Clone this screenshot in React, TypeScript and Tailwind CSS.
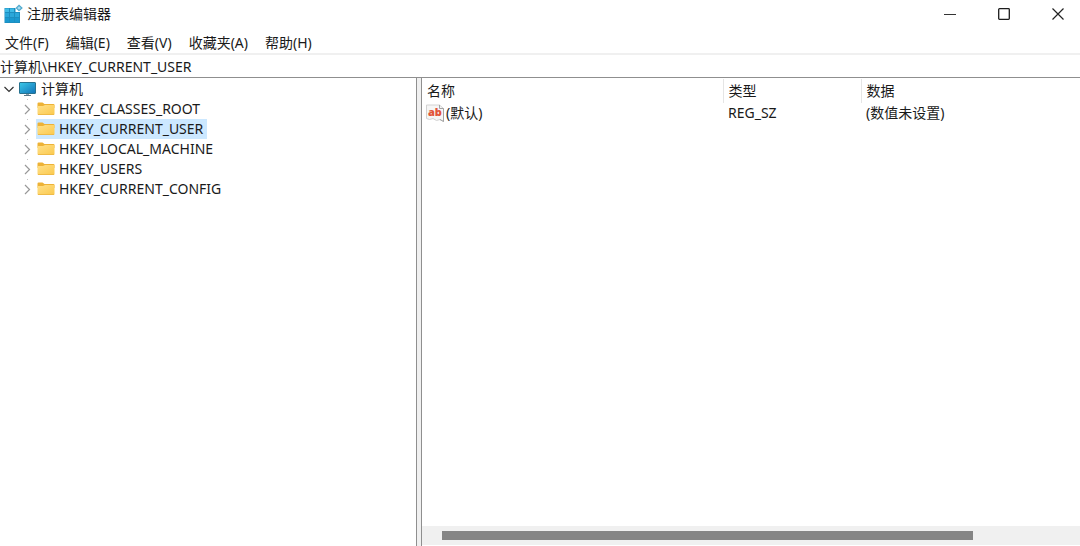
import React from 'react';

const menus = ['文件(F)', '编辑(E)', '查看(V)', '收藏夹(A)', '帮助(H)'];

const hives = [
  'HKEY_CLASSES_ROOT',
  'HKEY_CURRENT_USER',
  'HKEY_LOCAL_MACHINE',
  'HKEY_USERS',
  'HKEY_CURRENT_CONFIG',
];

const RegeditIcon = () => (
  <svg width="19" height="20" viewBox="0 0 19 20" aria-hidden="true">
    <path d="M0.500 4h11v4H16v11H0.500z" fill="#1c8ec0" />
    <path d="M1 4.500h4V8H1zM6 4.500h4V8H6z" fill="#3fbbe6" />
    <path d="M1 9h4v4H1zM6 9h4v4H6zM11 9h4v4h-4z" fill="#2ba7da" />
    <path d="M1 14h4v4H1zM6 14h4v4H6zM11 14h4v4h-4z" fill="#1a98cf" />
    <path d="M15 0.500l3.800 3.500L15 7.500 11.500 4z" fill="#4fa9cd" />
    <path d="M15 2.200l2 1.800-2 1.800L13.200 4z" fill="#a9dcf0" />
  </svg>
);

const ComputerIcon = () => (
  <svg width="18" height="16" viewBox="0 0 18 16" aria-hidden="true">
    <defs>
      <linearGradient id="screen" x1="0" y1="0" x2="1" y2="1">
        <stop offset="0" stopColor="#3cc8e8" />
        <stop offset="1" stopColor="#1173b8" />
      </linearGradient>
    </defs>
    <rect x="0.500" y="1.500" width="16" height="11" rx="0.500" fill="url(#screen)" stroke="#28728f" />
    <path d="M7 13h3v1.500H7z" fill="#8aa0ac" />
    <path d="M5 14h7v1H5z" fill="#5c7888" />
  </svg>
);

const FolderIcon = () => (
  <svg width="18" height="16" viewBox="0 0 18 16" aria-hidden="true">
    <defs>
      <linearGradient id="folder" x1="0" y1="0" x2="1" y2="1">
        <stop offset="0" stopColor="#ffe08a" />
        <stop offset="1" stopColor="#fbc94c" />
      </linearGradient>
    </defs>
    <path d="M0.500 2.500Q0.500 1.500 1.500 1.500H5.500L7.500 3H16.500Q17.500 3 17.500 4V7H0.500z" fill="#edb236" />
    <path d="M0.500 5H6L8 4H17.500V13Q17.500 14 16.500 14H1.500Q0.500 14 0.500 13z" fill="url(#folder)" />
    <path d="M1 13.500H17" stroke="#efbb48" />
  </svg>
);

const StringValueIcon = () => (
  <svg width="18" height="18" viewBox="0 0 18 18" aria-hidden="true">
    <path d="M0.500 1H13.500L17.500 4.500V17.500L14 15.500 10.500 16.500 7 14.500 3.500 15.500 0.500 14.500z" fill="#f6f6f6" stroke="#d2d2d2" />
    <path d="M13.500 1V4.500H17.500V17.500L14 15.500" fill="none" stroke="#a3a3a3" />
    <text x="2" y="12" fontFamily="Open Sans, sans-serif" fontSize="11" fontWeight="800" fill="#e2553a">ab</text>
  </svg>
);

const TreeChevron = () => (
  <svg width="10" height="20" viewBox="0 0 10 20" fill="none" aria-hidden="true">
    <path d="M3 6L7.500 10.500L3 15" stroke="#999" strokeWidth="1.200" />
    <path d="M5 0h1v1H5z" fill="#c4c4c4" />
  </svg>
);

const TitleBar = () => (
  <header className="flex h-7 items-center justify-between pl-1">
    <div className="flex items-center gap-1">
      <RegeditIcon />
      <h1>注册表编辑器</h1>
    </div>
    <div className="flex h-full gap-2.5">
      <button type="button" aria-label="最小化" className="flex w-11 items-center justify-center">
        <svg width="12" height="12" viewBox="0 0 12 12" stroke="#333"><path d="M0 6.500h12" /></svg>
      </button>
      <button type="button" aria-label="最大化" className="flex w-11 items-center justify-center">
        <svg width="12" height="12" viewBox="0 0 12 12" fill="none" stroke="#1c1c1c" strokeWidth="1.300">
          <rect x="0.700" y="0.700" width="10.600" height="10.600" rx="0.800" />
        </svg>
      </button>
      <button type="button" aria-label="关闭" className="flex w-11 items-center justify-center">
        <svg width="12" height="12" viewBox="0 0 12 12" stroke="#222" strokeWidth="1.200"><path d="M0.500 0.500l11 11M11.500 0.500l-11 11" /></svg>
      </button>
    </div>
  </header>
);

const KeyTree = () => (
  <nav className="w-[417px] shrink-0 border-r border-[#8f8f8f] pt-px" aria-label="注册表项">
    <button type="button" className="flex h-5 items-center pl-1">
      <svg width="10" height="10" viewBox="0 0 10 10" fill="none" stroke="#333" strokeWidth="1.200" aria-hidden="true">
        <path d="M0.500 3L5 7.500L9.500 3" />
      </svg>
      <span className="flex items-center gap-1 pl-[5px]">
        <ComputerIcon />
        计算机
      </span>
    </button>
    <ul>
      {hives.map((name) => (
        <li key={name} className="flex h-5 items-center pl-[22px]">
          <TreeChevron />
          <button
            type="button"
            className={
              name === 'HKEY_CURRENT_USER'
                ? 'ml-1 flex h-5 items-center gap-1 bg-[#cce8ff] pr-1 pl-px'
                : 'ml-1 flex h-5 items-center gap-1 pr-1 pl-px'
            }
          >
            <FolderIcon />
            {name}
          </button>
        </li>
      ))}
    </ul>
  </nav>
);

const ValueList = () => (
  <main className="flex min-w-0 flex-1 flex-col border-l border-[#8f8f8f] pt-px">
    <table className="w-full table-fixed text-left">
      <colgroup>
        <col className="w-[301px]" />
        <col className="w-[138px]" />
        <col />
      </colgroup>
      <thead>
        <tr className="h-6">
          <th className="border-r border-[#e5e5e5] pl-[5px] font-normal">名称</th>
          <th className="border-r border-[#e5e5e5] pl-[5px] font-normal">类型</th>
          <th className="pl-[5px] font-normal">数据</th>
        </tr>
      </thead>
      <tbody>
        <tr className="h-5">
          <td className="pl-1">
            <div className="flex items-center gap-0.5">
              <StringValueIcon />
              (默认)
            </div>
          </td>
          <td className="pl-[5px]">REG_SZ</td>
          <td className="pl-[5px]">(数值未设置)</td>
        </tr>
      </tbody>
    </table>
    <div className="mt-auto mb-px bg-[#f0f0f0] px-5 py-[5px]">
      <div
        role="scrollbar"
        aria-label="水平滚动"
        aria-orientation="horizontal"
        aria-valuenow={0}
        className="h-[9px] w-[86%] bg-[#858585]"
      />
    </div>
  </main>
);

const App = () => {
  return (
    <div className="flex min-h-screen flex-col bg-white font-['Noto_Sans','Noto_Sans_CJK_SC',sans-serif] text-[14px] leading-5 text-[#1a1a1a]">
      <TitleBar />
      <div className="flex h-[27px] items-center gap-[17px] border-b-2 border-[#f0f0f0] pt-1 pl-[5px]" role="menubar">
        {menus.map((label) => (
          <button key={label} type="button" role="menuitem">
            {label}
          </button>
        ))}
      </div>
      <input
        aria-label="地址"
        className="h-[23px] w-full border-b border-[#8f8f8f] outline-none"
        defaultValue="计算机\HKEY_CURRENT_USER"
      />
      <div className="flex flex-1">
        <KeyTree />
        <div className="w-1 shrink-0 bg-[#f0f0f0]" />
        <ValueList />
      </div>
    </div>
  );
};

export default App;
